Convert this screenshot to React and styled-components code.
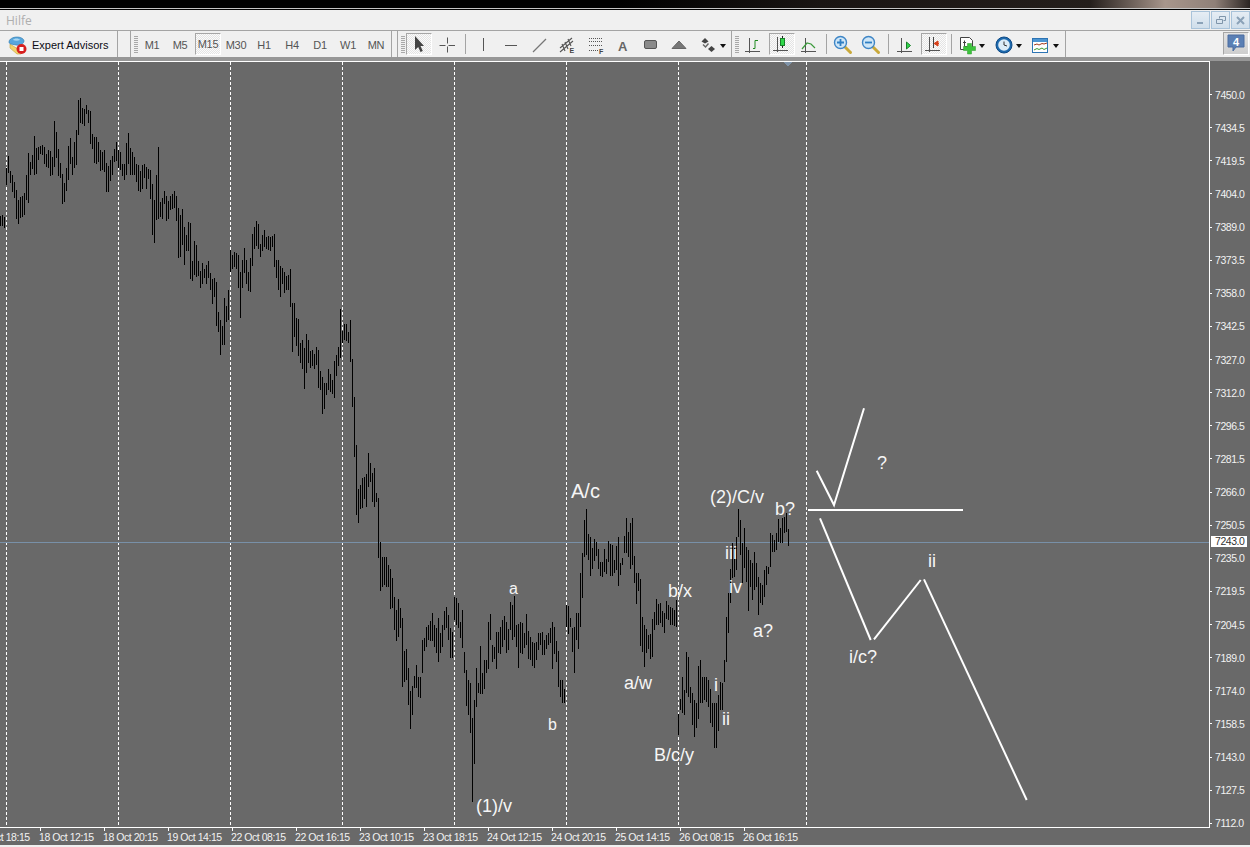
import React from 'react';
import styled, { createGlobalStyle } from 'styled-components';

const GlobalStyle = createGlobalStyle`
  html, body {
    margin: 0;
    padding: 0;
    background: #f0f0f0;
    overflow: hidden;
  }
  #root {
    height: 847px;
    overflow: hidden;
  }
`;

// bars traced off 3x crops: each pair is top-bottom in crop units, one pair per bar, bars 2px apart
const trace = (startX, originY, text) =>
  text.trim().split(/\s+/).map((pair, i) => {
    const [top, bottom] = pair.split('-').map(Number);
    return `M${startX + i * 2 + 0.5} ${Math.round(originY + top / 3)}V${Math.round(originY + bottom / 3)}`;
  }).join('');

const barPath = [
  trace(0, 60, `468-497 465-497 470-503 325-375 288-340 333-368 345-395 366-413 390-477 420-492 410-473 408-470
    398-465 345-420 279-428 306-345 285-327 228-345 265-342 260-300 258-282 255-285 262-312 282-322 270-325 273-347
    290-345 183-320 216-293 267-347 308-355 342-432 370-427 324-392 258-360 235-312 290-345 246-325 210-315 120-225
    114-190 144-192 147-198 135-162 150-188 153-252 222-267 231-310 231-312 246-306 270-333 276-330 270-336 309-396
    318-396 300-363 288-345 267-306 246-303 270-325 276-330 312-348 312-360 249-345 220-312 264-345 276-345 291-345
    312-366 315-393 333-396 315-387 312-354 321-387 327-357 330-417 372-525 420-549 345-480 261-477 426-471 414-477
    393-432 408-483 424-478 408-450 403-447 393-444 408-483 444-594 465-591 447-555 500-615 525-573 487-573 490-657
    603-663 543-645 555-651 603-648 632-684 609-672 627-654 615-672 603-654 640-690 657-732 655-710 666-798 756-816
    780-885 798-855 714-855`),
  trace(226, 210, `288-335 240-330 120-186 135-177 126-170 129-177 135-234 186-324 150-234 114-189 150-222 186-243
    144-246 72-168 51-117 33-108 42-117 102-141 75-123 60-111 81-117 78-120 81-123 78-111 72-171 150-204 150-240
    168-261 174-222 186-249 198-240 195-240 177-291 279-426 279-381 324-408 327-438 399-459 390-477 414-537 372-489
    390-459 423-474 420-468 432-477 411-465 420-534 483-540 501-612 519-597 519-555 477-540 492-546 510-552 453-564
    435-498 411-468 297-444 363-399 342-390 342-393 366-399 330-456`),
  trace(352, 300, `177-320 290-472 435-645 568-668 556-628 535-625 530-598 522-622 460-560 490-545 520-605 503-620
    580-605 595-775 725-872 770-862 772-855 770-860 795-862 808-928 835-925 890-990 930-1022 896-1010 925-985 955-1162
    1052-1145 1047-1140 1105-1215 1172-1288 1157-1245 1127-1165 1095-1165 1132-1192 1130-1195 1020-1118 1015-1052
    982-1040 975-1020 962-1022 938-1022 975-1040 985-1060 955-1086 1000-1060 975-1040 932-990 920-985 945-1020
    985-1075 995-1075 890-960 895-975 908-985 965-1015 930-1045 1055-1118 1110-1218 1140-1245 1148-1300 1255-1505
    1200-1392 1105-1222 1150-1180 1038-1182 1120-1182 1080-1168 1080-1120 965-1108 942-1020 1035-1085 1040-1078
    995-1108 995-1060 982-1062 960-1040 948-1020 965-1060 988-1050 905-990 915-1020 888-1010 975-1040 972-1105
    965-1060 970-1062 1000-1045 942-1035 992-1078 1010-1080 1025-1098 1028-1105 1025-1080 1000-1050 1000-1035
    997-1065 1020-1065 1005-1048 1000-1035 985-1030 965-1108 982-1062 1022-1085 1052-1162 1140-1190 1140-1208 1168-1210`),
  trace(566, 490, `345-410 348-432 385-410 415-486 410-548 368-450 370-476 250-410 190-323 90-200 57-195 132-210
    142-258 175-236 148-212 155-198 178-238 215-258 215-262 178-245 207-252 153-217 163-258 165-258 210-250 168-240
    140-288 218-255 204-225 138-190 84-190 125-200 98-236 84-225 198-280 248-342 248-304 268-468 380-486 405-530
    418-490 436-478 432-506 388-502 365-420 327-405 342-405 340-398 362-410 370-430 333-388 345-390 350-406 355-405
    360-408 330-410`),
  trace(678, 480, `703-765 657-690 592-700 630-705 517-640 530-650 620-668 640-735 660-772 670-745 558-718 540-670
    590-668 592-660 592-665 600-680 628-728 670-740 670-805 668-805 645-752 605-690 608-690 540-605 410-545 340-460
    267-370 190-295 205-290 170-270 88-170 120-225 190-310 145-265 200-305 210-392 240-320 250-360 215-330 250-320
    290-405 310-370 315-375 270-350 258-315 260-282 160-260 165-215 180-215 160-210 118-185 145-190 115-190 110-160
    100-155 148-197`),
].join('');

const periodSeps = [6, 118, 230, 342, 454, 566, 678, 806];

const notes = [
  { t: 'A/c', x: 571, y: 498, size: 20 },
  { t: '(1)/v', x: 476, y: 812, size: 18 },
  { t: 'a', x: 509, y: 594, size: 16 },
  { t: 'b', x: 548, y: 730, size: 16 },
  { t: 'a/w', x: 624, y: 689, size: 18 },
  { t: 'B/c/y', x: 654, y: 761, size: 18 },
  { t: 'b/x', x: 668, y: 597, size: 18 },
  { t: '(2)/C/v', x: 710, y: 503, size: 18 },
  { t: 'b?', x: 775, y: 515, size: 18 },
  { t: 'a?', x: 753, y: 637, size: 18 },
  { t: 'iii', x: 725, y: 559, size: 18 },
  { t: 'iv', x: 729, y: 593, size: 18 },
  { t: 'i', x: 714, y: 691, size: 18 },
  { t: 'ii', x: 722, y: 725, size: 18 },
  { t: '?', x: 877, y: 469, size: 18 },
  { t: 'i/c?', x: 849, y: 663, size: 18 },
  { t: 'ii', x: 928, y: 567, size: 18 },
];

const prices = ['7450.0', '7434.5', '7419.5', '7404.0', '7389.0', '7373.5', '7358.0', '7342.5', '7327.0', '7312.0', '7296.5', '7281.5',
  '7266.0', '7250.5', '7235.0', '7219.5', '7204.5', '7189.0', '7174.0', '7158.5', '7143.0', '7127.5', '7112.0'];

const times = ['17 Oct 18:15', '18 Oct 12:15', '18 Oct 20:15', '19 Oct 14:15', '22 Oct 08:15', '22 Oct 16:15', '23 Oct 10:15',
  '23 Oct 18:15', '24 Oct 12:15', '24 Oct 20:15', '25 Oct 14:15', '26 Oct 08:15', '26 Oct 16:15'];

const frames = ['M1', 'M5', 'M15', 'M30', 'H1', 'H4', 'D1', 'W1', 'MN'];

const Page = styled.div`
  width: 1250px;
  height: 847px;
  display: flex;
  flex-direction: column;
  background: #f0f0f0;
  font-family: 'Liberation Sans', Arial, sans-serif;
`;

const TitleStrip = styled.div`
  height: 8px;
  background: linear-gradient(90deg, #000 0, #000 620px, #1a1513 820px, #241e1b 1090px, #a8968c 1165px, #8f8078 1215px, #2a2422 1250px);
  border-bottom: 1px solid #c4c4c4;
`;

const MenuBar = styled.div`
  height: 20px;
  border-top: 1px solid #000;
  border-bottom: 1px solid #a4a4a4;
  display: flex;
  align-items: center;
  justify-content: space-between;
`;

const MenuItem = styled.span`
  margin-left: 6px;
  font-family: 'Open Sans', sans-serif;
  font-size: 12px;
  color: #aeaeae;
`;

const WindowButtons = styled.div`
  display: flex;
  gap: 1px;
`;

const WindowButton = styled.div`
  width: 17px;
  height: 16px;
  border: 1px solid #a9c3da;
  background: linear-gradient(#e6edf4, #cfdeeb);
  display: flex;
  align-items: center;
  justify-content: center;
`;

const Toolbar = styled.div`
  height: 26px;
  display: flex;
  border-bottom: 4px solid #979797;
  background: #f0f0f0;
`;

const Group = styled.div`
  display: flex;
  align-items: stretch;
  width: ${p => p.$width}px;
  flex: none;
  border-right: 1px solid #a4a4a4;
  box-sizing: border-box;
`;

const EaButton = styled.div`
  display: flex;
  align-items: center;
  gap: 4px;
  padding: 2px 0 0 8px;
  font-size: 11px;
  color: #0c0c14;
`;

const Grip = styled.div`
  width: 4px;
  height: 18px;
  flex: none;
  margin: 5px ${p => p.$after || 0}px 0 3px;
  background: repeating-linear-gradient(#a8a8a8 0, #a8a8a8 1px, transparent 1px, transparent 2px);
`;

const Tool = styled.div`
  width: ${p => (p.$drop ? 36 : 28)}px;
  flex: none;
  box-sizing: border-box;
  display: flex;
  align-items: center;
  justify-content: ${p => (p.$drop ? 'flex-start' : 'center')};
  padding-left: ${p => (p.$drop ? 4 : 0)}px;
  padding-top: 2px;
  position: relative;
  font-size: 11px;
  letter-spacing: -0.3px;
  color: #555;

  ${p => p.$on && `
    margin: 2px 1px 2px 1px;
    padding-top: 0;
    width: 26px;
    border: 1px solid;
    border-color: #a6a6a6 #fff #fff #a6a6a6;
    background: repeating-conic-gradient(#e4e4e4 0 25%, #fbfbfb 0 50%) 0 0 / 2px 2px;
  `}

  ${p => p.$drop && `
    &::after {
      content: '';
      position: absolute;
      right: ${p.$dropRight ?? 5}px;
      top: 13px;
      border: 3px solid transparent;
      border-top: 4px solid #111;
      border-bottom: 0;
    }
  `}
`;

const Slot = styled.div`
  width: ${p => p.$width}px;
  flex: none;
  display: flex;
  justify-content: center;
  padding-top: 3px;
  box-sizing: border-box;

  &::before {
    content: '';
    width: 1px;
    height: 20px;
    background: #a4a4a4;
  }
`;

const Spacer = styled.div`
  flex: 1;
  display: flex;
  justify-content: flex-end;
`;

const Bubble = styled.div`
  width: 26px;
  height: 23px;
  margin: 1px 1px 0 0;
  box-sizing: border-box;
  border: 1px solid;
  border-color: #a6a6a6 #fff #fff #a6a6a6;
  background: linear-gradient(#e2e2e2, #cecece);
  display: flex;
  justify-content: center;
  padding-top: 1px;
`;

const ChartRow = styled.div`
  display: flex;
  height: 767px;
  background: #696969;
`;

const Canvas = styled.div`
  width: 1209px;
  height: 765px;
  flex: none;
  position: relative;
  border: 1px solid #fff;
  border-width: 1px 1px 1px 0;
  overflow: hidden;
`;

const ChartSvg = styled.svg`
  display: block;
`;

const Note = styled.text`
  font-family: 'Liberation Sans', Arial, sans-serif;
  font-size: ${p => p.$size}px;
  fill: #f6f6f6;
`;

const PriceAxis = styled.div`
  flex: 1;
  position: relative;
  padding-top: 17px;
  display: flex;
  flex-direction: column;
`;

const PriceRow = styled.div`
  height: 33.14px;
  flex: none;
  display: flex;
  align-items: center;
  gap: 3px;
  font-size: 10.5px;
  letter-spacing: -0.45px;
  color: #f2f2f2;

  &::before {
    content: '';
    width: 2px;
    height: 1px;
    background: #fff;
  }
`;

const PriceFlag = styled.div`
  position: absolute;
  left: 1px;
  top: 475px;
  width: 32px;
  height: 11px;
  padding-left: 4px;
  background: #fff;
  color: #333;
  font-size: 10.5px;
  line-height: 11px;
  letter-spacing: -0.45px;
`;

const TimeAxis = styled.div`
  height: 17px;
  flex: none;
  background: #696969;
  display: flex;
  overflow: hidden;
`;

const TimeCell = styled.div`
  width: 64px;
  flex: none;
  margin-left: ${p => (p.$first ? -25 : 0)}px;
  padding-top: 3px;
  font-size: 10.5px;
  line-height: 12px;
  letter-spacing: -0.45px;
  white-space: nowrap;
  color: #f2f2f2;
  background: linear-gradient(#fff, #fff) no-repeat 1px 0 / 1px 3px;
`;

const Glyph = ({ w = 20, h = 20, children }) => (
  <svg width={w} height={h} viewBox={`0 0 ${w} ${h}`}>{children}</svg>
);

const Axes = () => (
  <path d="M5.500 3v15M1 16.500h15" stroke="#555" strokeWidth="1" fill="none" shapeRendering="crispEdges" />
);

const EaIcon = () => (
  <Glyph w={20} h={20}>
    <path d="M2 9l11 7v3H9L2 13z" fill="#f1d36a" stroke="#c2a23c" strokeWidth="0.6" />
    <path d="M1 7c0-3 4-5 8-5s7 2 7 4-3 5-8 4-7-1-7-3z" fill="#57a6dc" stroke="#2f78ad" strokeWidth="0.6" />
    <path d="M5 5c1-2 6-2 7 0-2 1-5 1-7 0z" fill="#a8d6f2" />
    <circle cx="13.500" cy="14" r="5" fill="#d61e1e" />
    <rect x="11.500" y="12" width="4" height="4" fill="#fff" />
  </Glyph>
);

const ChannelIcon = () => (
  <Glyph w={20} h={20}>
    <path d="M3 13L15 3M3 17L16 6M5 9l3 7M8 7l3 7M11 4l3 7" stroke="#555" strokeWidth="1.100" fill="none" />
    <text x="12.500" y="18" fontFamily="Liberation Sans" fontWeight="700" fontSize="7" fill="#444">E</text>
  </Glyph>
);

const FiboIcon = () => (
  <Glyph w={20} h={20}>
    <path d="M4 3.500h13M4 6.500h13M4 10.500h13M4 15.500h9" stroke="#555" strokeDasharray="1 1" fill="none" />
    <text x="14" y="18.500" fontFamily="Liberation Sans" fontWeight="700" fontSize="7" fill="#444">F</text>
  </Glyph>
);

const ArrowsIcon = () => (
  <Glyph w={20} h={20}>
    <path d="M4.500 6.500L8 3l3.500 3.500L8 8.500z" fill="#444" />
    <path d="M6 9.500l2.500 2.500 3-3.500" stroke="#666" strokeWidth="1.400" fill="none" />
    <path d="M11 14l3.500-3 3.500 3-3.500 3z" fill="#444" />
  </Glyph>
);

const MagnifierIcon = ({ plus }) => (
  <Glyph w={20} h={20}>
    <path d="M11.500 11.500l6 6" stroke="#c9a93a" strokeWidth="3" strokeLinecap="round" />
    <circle cx="7.500" cy="7.500" r="6" fill="#cfe6f7" stroke="#3f86c6" strokeWidth="1.400" />
    <path d={plus ? 'M4 7.500h7M7.500 4v7' : 'M4 7.500h7'} stroke="#2f7fc4" strokeWidth="1.800" />
  </Glyph>
);

const NewChartIcon = () => (
  <Glyph w={20} h={20}>
    <path d="M2.500 2.500h9l3 3v9h-12z" fill="#fff" stroke="#444" />
    <path d="M6.500 5.500v6h3M5 7.500h3" stroke="#444" fill="none" />
    <path d="M9.500 8.500h4v3h4v4h-4v3.500h-4v-3.500h-4v-4h4z" fill="#3cc43c" stroke="#2a9a2a" strokeWidth="0.5" />
  </Glyph>
);

const ClockIcon = () => (
  <Glyph w={20} h={20}>
    <circle cx="10" cy="10" r="8" fill="#1d69ad" stroke="#0e4a86" />
    <circle cx="10" cy="10" r="5.800" fill="#dcecf8" />
    <path d="M10 6.500V10l3 1" stroke="#333" fill="none" />
  </Glyph>
);

const TemplateIcon = () => (
  <Glyph w={20} h={20}>
    <rect x="2.500" y="3.500" width="15" height="14" fill="#fff" stroke="#2c74b4" />
    <rect x="3" y="4" width="14" height="3" fill="#4c95d2" />
    <path d="M4 10l3-1 2 1 3-1.500 2 .5 3-1" stroke="#a33b1c" fill="none" />
    <path d="M4 15l3-1.500 2 1 3-1.500 2 1.500 3-1.500" stroke="#3b9a32" fill="none" />
  </Glyph>
);

const App = () => (
  <Page>
    <GlobalStyle />
    <TitleStrip />
    <MenuBar>
      <MenuItem>Hilfe</MenuItem>
      <WindowButtons>
        <WindowButton>
          <Glyph w={9} h={9}><path d="M1 7h6" stroke="#8ba2b8" strokeWidth="2" /></Glyph>
        </WindowButton>
        <WindowButton>
          <Glyph w={10} h={9}><path d="M3.500 2.500V.5h6v4h-2M.5 3.500h6v4h-6z" stroke="#7f95aa" fill="none" /></Glyph>
        </WindowButton>
        <WindowButton>
          <Glyph w={9} h={9}><path d="M1 1l7 7M8 1L1 8" stroke="#8ba2b8" strokeWidth="2" /></Glyph>
        </WindowButton>
      </WindowButtons>
    </MenuBar>

    <Toolbar>
      <Group $width={118}>
        <EaButton><EaIcon />Expert Advisors</EaButton>
      </Group>
      <Group $width={13} />
      <Group $width={261}>
        <Grip />
        {frames.map(f => (
          <Tool key={f} $on={f === 'M15'}>{f}</Tool>
        ))}
      </Group>
      <Group $width={6} />
      <Group $width={334}>
        <Grip />
        <Tool $on>
          <Glyph w={12} h={16}><path d="M2 0v14l3.200-3 2.300 5 2.300-1-2.300-5H11z" fill="#444" /></Glyph>
        </Tool>
        <Tool>
          <Glyph w={16} h={16}><path d="M0 8h6M9 8h7M8 0v6M8 9v6" stroke="#555" fill="none" transform="translate(0.5 0.5)" /></Glyph>
        </Tool>
        <Slot $width={8} />
        <Tool><Glyph w={16} h={16}><path d="M8.500 1v13" stroke="#555" /></Glyph></Tool>
        <Tool><Glyph w={16} h={16}><path d="M2 8.500h12" stroke="#555" /></Glyph></Tool>
        <Tool><Glyph w={16} h={16}><path d="M2 15L15 2" stroke="#777" strokeWidth="1.200" /></Glyph></Tool>
        <Tool><ChannelIcon /></Tool>
        <Tool><FiboIcon /></Tool>
        <Tool><Glyph w={14} h={16}><text x="2" y="14" fontFamily="Liberation Sans" fontWeight="700" fontSize="13" fill="#666">A</text></Glyph></Tool>
        <Tool><Glyph w={16} h={12}><rect x="1.500" y="1.500" width="12" height="8" rx="1.500" fill="#8a8a8a" stroke="#555" /></Glyph></Tool>
        <Tool><Glyph w={16} h={12}><path d="M1 9.500L8 2l7 7.500z" fill="#777" stroke="#666" /></Glyph></Tool>
        <Tool $drop $dropRight={3}><ArrowsIcon /></Tool>
      </Group>
      <Group $width={334}>
        <Grip $after={1} />
        <Tool>
          <Glyph><Axes /><path d="M9 13.500h2v-8h3" stroke="#1f8a1f" fill="none" /></Glyph>
        </Tool>
        <Tool $on>
          <Glyph><Axes /><path d="M10.500 2v12" stroke="#222" /><rect x="8.500" y="4.500" width="4" height="7" fill="#2fd84a" stroke="#1a7f2a" /></Glyph>
        </Tool>
        <Tool>
          <Glyph><Axes /><path d="M2 14l5-6 4 1 4 4" stroke="#3a9a3a" fill="none" strokeWidth="1.200" /></Glyph>
        </Tool>
        <Slot $width={5} />
        <Tool><MagnifierIcon plus /></Tool>
        <Tool><MagnifierIcon /></Tool>
        <Slot $width={7} />
        <Tool><Glyph><Axes /><path d="M10.500 7v7l4-3.500z" fill="#2fd84a" stroke="#1a7f2a" /></Glyph></Tool>
        <Tool $on><Glyph><Axes /><path d="M9.500 3v11" stroke="#444" /><path d="M15 9.500h-3M14 7l-4 2.500 4 2.500z" fill="#d8401a" stroke="#d8401a" /></Glyph></Tool>
        <Slot $width={6} />
        <Tool $drop><NewChartIcon /></Tool>
        <Tool $drop $dropRight={4}><ClockIcon /></Tool>
        <Tool $drop $dropRight={3}><TemplateIcon /></Tool>
      </Group>
      <Spacer>
        <Bubble>
          <Glyph w={18} h={19}>
            <path d="M1 1h16v12H9l-3 4v-4H1z" fill="#5a7fb4" stroke="#4a6da0" />
            <text x="9" y="11.500" textAnchor="middle" fontFamily="Liberation Sans" fontWeight="700" fontSize="11" fill="#fff">4</text>
          </Glyph>
        </Bubble>
      </Spacer>
    </Toolbar>

    <ChartRow>
      <Canvas>
        <ChartSvg width="1209" height="765" viewBox="0 62 1209 765">
          <g shapeRendering="crispEdges">
            {periodSeps.map(x => (
              <path key={x} d={`M${x + 0.5} 62V827`} stroke="#fff" strokeDasharray="3 2" />
            ))}
            <path d="M0 542.500H1209" stroke="#7890a8" />
            <path d={barPath} stroke="#000" fill="none" />
            <path d="M783 62h10l-5 4z" fill="#7f93a8" />
          </g>
          <g stroke="#fff" strokeWidth="2" fill="none">
            <path d="M816.700 470.700L834 505L864 408.300" />
            <path d="M808 510H963" />
            <path d="M820 518.300L870.700 640" />
            <path d="M874 639.300L920.700 580" />
            <path d="M924 579.300L1026.700 800" />
          </g>
          {notes.map(n => (
            <Note key={`${n.t}${n.x}`} x={n.x} y={n.y} $size={n.size}>{n.t}</Note>
          ))}
        </ChartSvg>
      </Canvas>
      <PriceAxis>
        {prices.map(p => (
          <PriceRow key={p}>{p}</PriceRow>
        ))}
        <PriceFlag>7243.0</PriceFlag>
      </PriceAxis>
    </ChartRow>

    <TimeAxis>
      {times.map((t, i) => (
        <TimeCell key={t} $first={i === 0}>{t}</TimeCell>
      ))}
    </TimeAxis>
  </Page>
);

export default App;
